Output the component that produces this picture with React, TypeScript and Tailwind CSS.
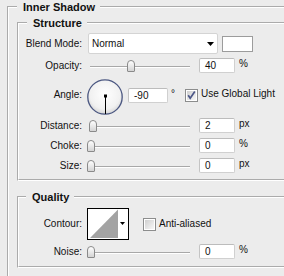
import React from "react";

function Label({ children, className = "" }: { children: React.ReactNode; className?: string }) {
  return <div className={`w-[63px] shrink-0 text-right leading-[12px] ${className}`}>{children}</div>;
}

function Slider({ pos }: { pos: number }) {
  return (
    <div className="relative ml-[5px] h-[15px] w-[103px] shrink-0">
      <div className="absolute left-[3px] right-0 top-[8px] h-[2px] border-t border-[#a8a8a8] bg-white" />
      <div
        className="absolute top-[2px] h-[12px] w-[8px] rounded-t-[4px] rounded-b-[1px] border border-[#8a8a8a] bg-gradient-to-b from-white to-[#d4d4d4]"
        style={{ left: pos }}
      />
    </div>
  );
}

function NumInput({ value, className = "" }: { value: string; className?: string }) {
  return (
    <div
      className={`h-[15px] shrink-0 rounded-[2px] border border-[#d0d0d0] border-t-[#bcbcbc] border-l-[#c4c4c4] bg-white pl-[5px] leading-[13px] ${className}`}
    >
      {value}
    </div>
  );
}

function Unit({ children }: { children: React.ReactNode }) {
  return <span className="ml-[4px] self-start leading-[12px]">{children}</span>;
}

function Checkbox({ checked, id }: { checked: boolean; id: string }) {
  return (
    <svg width="13" height="13" viewBox="0 0 13 13" className="shrink-0">
      <defs>
        <linearGradient id={id} x1="0" y1="0" x2="1" y2="1">
          <stop offset="0" stopColor="#cfcfcf" />
          <stop offset="1" stopColor="#f7f7f7" />
        </linearGradient>
      </defs>
      <rect x="0.5" y="0.5" width="12" height="12" fill="#fff" stroke="#8c8d8d" />
      <rect x="2" y="2" width="9" height="9" fill={`url(#${id})`} />
      {checked && (
        <path d="M3.2 6.2 L5.2 9.2 L9.8 2.6" stroke="#4b5687" strokeWidth="1.7" fill="none" strokeLinejoin="miter" />
      )}
    </svg>
  );
}

function Dial() {
  return (
    <svg width="36" height="36" viewBox="0 0 36 36" className="ml-[5px] shrink-0">
      <defs>
        <radialGradient id="dialg" cx="50%" cy="42%" r="58%">
          <stop offset="0" stopColor="#ffffff" />
          <stop offset="0.75" stopColor="#f1f1f1" />
          <stop offset="1" stopColor="#d6d6d6" />
        </radialGradient>
      </defs>
      <circle cx="18" cy="18" r="17.2" fill="url(#dialg)" stroke="#4c5882" strokeWidth="1.3" />
      <line x1="18.5" y1="17" x2="18.5" y2="35" stroke="#000" strokeWidth="1" />
      <rect x="17" y="15.5" width="3" height="3" fill="#000" />
    </svg>
  );
}

function Contour() {
  return (
    <svg width="42" height="32" viewBox="0 0 42 32" className="ml-[5px] shrink-0">
      <rect x="0.5" y="0.5" width="41" height="31" fill="#fff" stroke="#000" />
      <polygon points="3,30 31,1.5 31,30" fill="#a3a3a3" />
      <path d="M33 14h5l-2.5 3z" fill="#000" />
    </svg>
  );
}

const groove = "border-2 border-white [--tw-border-style:groove] [border-style:groove]";

export default function App() {
  return (
    <div className="h-[276px] w-[284px] overflow-hidden bg-[#ececec] font-['Liberation_Sans',Arial,sans-serif] text-[10px] text-[#111]">
      <fieldset className={`ml-[7px] h-[320px] w-[320px] ${groove}`}>
        <legend className="ml-[8px] pl-[6px] pr-[5px] text-[11px] font-bold leading-[14px]">Inner Shadow</legend>

        <fieldset className={`ml-[8px] mt-[2px] w-[300px] pb-[6px] ${groove}`}>
          <legend className="ml-[8px] pl-[6px] pr-[5px] text-[11px] font-bold leading-[14px]">Structure</legend>

          <div className="mt-[3px] flex h-[21px] items-center">
            <Label>Blend Mode:</Label>
            <div className="ml-[6px] flex h-[21px] w-[130px] shrink-0 items-center justify-between rounded-[2px] border border-[#d4d4d4] bg-white pl-[3px] pr-[3px]">
              <span className="text-[10px]">Normal</span>
              <svg width="7" height="4" viewBox="0 0 7 4">
                <path d="M0 0h7L3.5 4z" fill="#000" />
              </svg>
            </div>
            <div className="ml-[4px] h-[16px] w-[31px] shrink-0 border border-[#9c9c9c] bg-white" />
          </div>

          <div className="mt-[4px] flex h-[15px] items-center">
            <Label>Opacity:</Label>
            <Slider pos={40} />
            <NumInput value="40" className="ml-[9px] w-[36px]" />
            <Unit>%</Unit>
          </div>

          <div className="mt-[6px] flex h-[36px] items-start">
            <Label className="mt-[10px]">Angle:</Label>
            <Dial />
            <NumInput value="-90" className="ml-[5px] mt-[9px] w-[40px] pl-[4px]" />
            <span className="mt-[9px] w-[17px] shrink-0 pl-[3px] leading-[12px]">°</span>
            <div className="mt-[10px]">
              <Checkbox checked id="cb1" />
            </div>
            <span className="ml-[3px] mt-[9px] leading-[12px]">Use Global Light</span>
          </div>

          <div className="mt-[3px] flex h-[15px] items-center">
            <Label>Distance:</Label>
            <Slider pos={2} />
            <NumInput value="2" className="ml-[9px] w-[36px]" />
            <Unit>px</Unit>
          </div>

          <div className="mt-[5px] flex h-[15px] items-center">
            <Label>Choke:</Label>
            <Slider pos={0} />
            <NumInput value="0" className="ml-[9px] w-[36px]" />
            <Unit>%</Unit>
          </div>

          <div className="mt-[5px] flex h-[15px] items-center">
            <Label>Size:</Label>
            <Slider pos={0} />
            <NumInput value="0" className="ml-[9px] w-[36px]" />
            <Unit>px</Unit>
          </div>
        </fieldset>

        <fieldset className={`ml-[8px] mt-[9px] w-[300px] pb-[7px] ${groove}`}>
          <legend className="ml-[7px] pl-[6px] pr-[5px] text-[11px] font-bold leading-[14px]">Quality</legend>

          <div className="mt-[4px] flex h-[32px] items-center">
            <Label>Contour:</Label>
            <Contour />
            <div className="ml-[14px]">
              <Checkbox checked={false} id="cb2" />
            </div>
            <span className="ml-[3px] leading-[12px]">Anti-aliased</span>
          </div>

          <div className="mt-[4px] flex h-[15px] items-center">
            <Label>Noise:</Label>
            <Slider pos={0} />
            <NumInput value="0" className="ml-[9px] w-[36px]" />
            <Unit>%</Unit>
          </div>
        </fieldset>
      </fieldset>
    </div>
  );
}
